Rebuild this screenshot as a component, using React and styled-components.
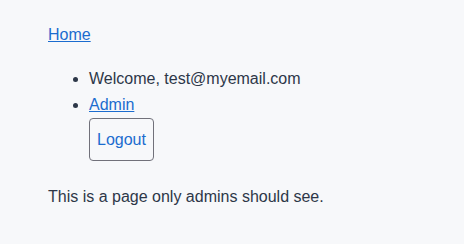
import React from "react";
import styled, { createGlobalStyle } from "styled-components";

const GlobalStyle = createGlobalStyle`
  html, body {
    margin: 0;
    padding: 0;
    background: #f7f8fa;
  }
  body {
    font-family: "Liberation Sans", Arial, Helvetica, sans-serif;
    font-size: 16px;
    line-height: 24px;
    color: #2d3748;
  }
`;

const Page = styled.div`
  padding: 23px 48px 36px;
  min-height: 244px;
  box-sizing: border-box;
`;

const NavLink = styled.a`
  color: #1b6ccf;
  text-decoration: underline;
  cursor: pointer;
`;

const Menu = styled.ul`
  margin: 20px 0 0;
  padding-left: 41px;
  list-style: disc;
`;

const Item = styled.li`
  margin-bottom: 2px;
  &::marker {
    color: #2d3748;
  }
`;

const LogoutButton = styled.button`
  display: block;
  margin-top: 1px;
  padding: 9px 7px;
  font-family: inherit;
  font-size: 16px;
  line-height: 23px;
  color: #1b6ccf;
  background: transparent;
  border: 1px solid #71717a;
  border-radius: 4px;
  cursor: pointer;
`;

const Message = styled.p`
  margin: 24px 0 0;
`;

export default function App() {
  return (
    <>
      <GlobalStyle />
      <Page>
        <NavLink href="#">Home</NavLink>
        <Menu>
          <Item>Welcome, test@myemail.com</Item>
          <Item>
            <NavLink href="#">Admin</NavLink>
            <LogoutButton>Logout</LogoutButton>
          </Item>
        </Menu>
        <Message>This is a page only admins should see.</Message>
      </Page>
    </>
  );
}
